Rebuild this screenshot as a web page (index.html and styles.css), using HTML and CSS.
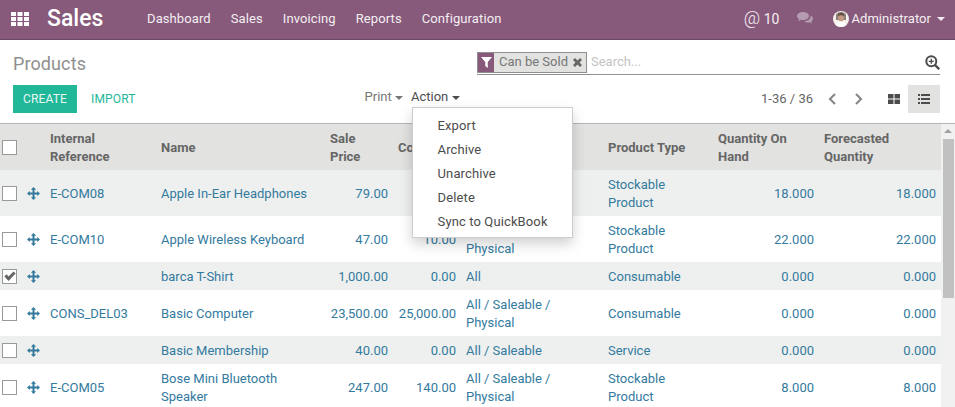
FILE: index.html
```html
<!DOCTYPE html>
<html>
<head>
    <title>Products - Sales</title>
    <meta charset="utf-8">
    <link rel="stylesheet" href="styles.css">
</head>
<body>
    <nav class="navbar">
        <svg class="apps" width="18" height="14" viewBox="0 0 18 14"><path fill="#fff" d="M0 0h5v4H0zM6.500 0h5v4h-5zM13 0h5v4h-5zM0 5h5v4H0zM6.500 5h5v4h-5zM13 5h5v4h-5zM0 10h5v4H0zM6.500 10h5v4h-5zM13 10h5v4h-5z"/></svg>
        <span class="brand">Sales</span>
        <ul class="menu">
            <li>Dashboard</li>
            <li>Sales</li>
            <li>Invoicing</li>
            <li>Reports</li>
            <li>Configuration</li>
        </ul>
        <div class="systray">
            <span class="mentions"><span class="at">@</span> 10</span>
            <svg class="chat" width="16" height="13" viewBox="0 0 16 13"><path fill="#b49bb0" d="M6 0c3.300 0 6 1.800 6 4s-2.700 4-6 4c-.7 0-1.300-.1-1.900-.2C3.100 8.600 2 9 1 9c.6-.6 1-1.300 1.100-2C.8 6.300 0 5.200 0 4c0-2.200 2.700-4 6-4z"/><path fill="#b49bb0" d="M13 3.500c1.800.6 3 1.800 3 3.200 0 1.100-.7 2-1.800 2.700.1.700.5 1.300 1 1.800-1 0-1.900-.4-2.700-1-.5.100-1 .2-1.500.2-1.700 0-3.200-.6-4-1.500 3.500.2 6.500-1.800 6.500-4.500 0-.3 0-.6-.5-.9z"/></svg>
            <span class="user">
                <svg class="avatar" width="16" height="16" viewBox="0 0 16 16"><circle cx="8" cy="8" r="8" fill="#f4f1ee"/><path fill="#8b7f78" d="M3 3.500C4.300 1.800 6 1 8 1s3.700.8 5 2.500V9H3z"/><ellipse cx="8" cy="6.500" rx="3" ry="4" fill="#c09a82"/><path fill="#5e4c44" d="M4.800 5.500C4.800 3 6.300 1.800 8 1.800s3.200 1.200 3.200 3.700c-.8-1-2-1.300-3.200-1.300S5.600 4.500 4.800 5.500z"/><path fill="#fff" d="M2.500 14c.7-2.300 2.700-3.500 5.500-3.500s4.800 1.200 5.500 3.500c-1.500 1.300-3.400 2-5.500 2s-4-.7-5.500-2z"/></svg>
                Administrator <i class="caret"></i>
            </span>
        </div>
    </nav>

    <div class="control-panel">
        <div class="cp-top">
            <h1 class="title">Products</h1>
            <div class="search">
                <span class="facet">
                    <span class="facet-icon"><svg width="11" height="11" viewBox="0 0 11 11"><path fill="#fff" d="M0 0h11L6.800 5v6L4.200 9V5z"/></svg></span>
                    <span class="facet-label">Can be Sold</span>
                    <svg class="facet-x" width="9" height="9" viewBox="0 0 9 9"><path fill="#666" d="M2 0l2.500 2.500L7 0l2 2-2.500 2.500L9 7 7 9 4.500 6.500 2 9 0 7l2.500-2.500L0 2z"/></svg>
                </span>
                <span class="search-text">Search...</span>
                <svg class="search-more" width="15" height="15" viewBox="0 0 15 15"><circle cx="6.300" cy="6.300" r="5" fill="none" stroke="#4c4c4c" stroke-width="2"/><path stroke="#4c4c4c" stroke-width="2.400" d="M10 10l4.200 4.200"/><path stroke="#4c4c4c" stroke-width="1.300" d="M3.800 6.300h5M6.300 3.800v5"/></svg>
            </div>
        </div>
        <div class="cp-bottom">
            <div class="buttons">
                <button class="btn-create">CREATE</button>
                <button class="btn-import">IMPORT</button>
            </div>
            <div class="sidebar">
                <span class="print">Print <i class="caret"></i></span>
                <span class="action">Action <i class="caret"></i></span>
                <ul class="dropdown">
                    <li>Export</li>
                    <li>Archive</li>
                    <li>Unarchive</li>
                    <li>Delete</li>
                    <li>Sync to QuickBook</li>
                </ul>
            </div>
            <div class="right-tools">
                <span class="pager">1-36 / 36</span>
                <svg class="chev" width="8" height="12" viewBox="0 0 8 12"><path fill="none" stroke="#8a8a8a" stroke-width="2.200" d="M7 1L2 6l5 5"/></svg>
                <svg class="chev" width="8" height="12" viewBox="0 0 8 12"><path fill="none" stroke="#8a8a8a" stroke-width="2.200" d="M1 1l5 5-5 5"/></svg>
                <span class="view view-grid">
                    <svg width="12" height="10" viewBox="0 0 12 10"><path fill="#4c4c4c" d="M0 0h5.500v4.400H0zM6.500 0H12v4.400H6.500zM0 5.400h5.500V10H0zM6.500 5.400H12V10H6.500z"/></svg>
                </span>
                <span class="view view-active">
                    <svg width="12" height="10" viewBox="0 0 12 10"><path fill="#4c4c4c" d="M0 0h2v2H0zM3 0h9v2H3zM0 4h2v2H0zM3 4h9v2H3zM0 8h2v2H0zM3 8h9v2H3z"/></svg>
                </span>
            </div>
        </div>
    </div>

    <div class="list-wrap">
        <table class="list">
            <colgroup>
                <col class="c-check"><col class="c-handle"><col class="c-ref"><col class="c-name"><col class="c-price"><col class="c-cost"><col class="c-cat"><col class="c-type"><col class="c-qty"><col class="c-fore">
            </colgroup>
            <thead>
                <tr>
                    <th><span class="check"></span></th>
                    <th></th>
                    <th>Internal Reference</th>
                    <th>Name</th>
                    <th>Sale Price</th>
                    <th>Cost</th>
                    <th>Internal Category</th>
                    <th>Product Type</th>
                    <th>Quantity On Hand</th>
                    <th>Forecasted Quantity</th>
                </tr>
            </thead>
            <tbody id="rows"></tbody>
        </table>
        <div class="scrollbar">
            <span class="scroll-up"></span>
            <span class="scroll-thumb"></span>
        </div>
    </div>

    <script>
        var products = [
            ['E-COM08', 'Apple In-Ear Headphones', '79.00', '70.00', 'All / Saleable / Physical', 'Stockable Product', '18.000', '18.000', false],
            ['E-COM10', 'Apple Wireless Keyboard', '47.00', '10.00', 'All / Saleable / Physical', 'Stockable Product', '22.000', '22.000', false],
            ['', 'barca T-Shirt', '1,000.00', '0.00', 'All', 'Consumable', '0.000', '0.000', true],
            ['CONS_DEL03', 'Basic Computer', '23,500.00', '25,000.00', 'All / Saleable / Physical', 'Consumable', '0.000', '0.000', false],
            ['', 'Basic Membership', '40.00', '0.00', 'All / Saleable', 'Service', '0.000', '0.000', false],
            ['E-COM05', 'Bose Mini Bluetooth Speaker', '247.00', '140.00', 'All / Saleable / Physical', 'Stockable Product', '8.000', '8.000', false]
        ];

        // move handle: cross shafts with four arrow heads
        var handle = '<svg width="13" height="13" viewBox="0 0 13 13"><path fill="#337a9e" d="M6.500 0l2.600 2.800H7.500v2.700h2.700V3.900L13 6.500l-2.800 2.600V7.500H7.500v2.700h1.600L6.500 13l-2.600-2.800h1.600V7.500H2.800v1.600L0 6.500l2.800-2.600v1.600h2.700V2.800H3.900z"/></svg>';

        var html = '';
        products.forEach(function (p) {
            html += '<tr>' +
                '<td><span class="check' + (p[8] ? ' checked' : '') + '"></span></td>' +
                '<td class="handle">' + handle + '</td>' +
                '<td>' + p[0] + '</td>' +
                '<td>' + p[1] + '</td>' +
                '<td class="num">' + p[2] + '</td>' +
                '<td class="num">' + p[3] + '</td>' +
                '<td>' + p[4] + '</td>' +
                '<td>' + p[5] + '</td>' +
                '<td class="num">' + p[6] + '</td>' +
                '<td class="num">' + p[7] + '</td>' +
                '</tr>';
        });
        document.getElementById('rows').innerHTML = html;
    </script>
</body>
</html>
```

FILE: styles.css
```css
html, body {
    height: 100%;
}
body {
    font-family: Roboto, "Noto Sans", sans-serif;
    font-size: 13px;
    line-height: 18px;
    margin: 0;
    color: #4c4c4c;
    background: white;
    overflow: hidden;
    display: flex;
    flex-direction: column;
}
ul { list-style: none; margin: 0; padding: 0; }
.caret {
    display: inline-block;
    width: 0;
    height: 0;
    vertical-align: middle;
    border-top: 4px solid currentColor;
    border-left: 4px solid transparent;
    border-right: 4px solid transparent;
}

.navbar {
    flex: none;
    box-sizing: border-box;
    height: 40px;
    display: flex;
    align-items: center;
    background: #875a7b;
    border-bottom: 1px solid #6b4862;
    color: white;
    padding: 0 10px 2px 11px;
}
.apps { margin-right: 18px; }
.brand { font-size: 23px; font-weight: 500; width: 100px; }
.menu { display: flex; gap: 20px; color: #f4eef2; letter-spacing: 0.1px; }
.systray { margin-left: auto; display: flex; align-items: center; color: #f4eef2; }
.mentions { font-size: 14px; }
.at { font-size: 18px; font-weight: 300; }
.chat { margin-left: 17px; margin-right: 20px; }
.user { display: flex; align-items: center; gap: 3px; letter-spacing: 0.05px; }
.user .caret { margin-left: 3px; }

.control-panel {
    flex: none;
    box-sizing: border-box;
    height: 84px;
    padding: 11px 15px 0 13px;
    border-bottom: 1px solid #b5b5b5;
}
.cp-top { display: flex; justify-content: space-between; height: 34px; }
.title { margin: 0; font-size: 18px; font-weight: 400; line-height: 26px; color: #8f8f8f; letter-spacing: 0.1px; }
.search {
    width: 463px;
    height: 22px;
    box-sizing: content-box;
    display: flex;
    align-items: center;
    border-bottom: 1px solid #919191;
    padding-bottom: 1px;
}
.facet {
    display: flex;
    align-items: center;
    box-sizing: border-box;
    height: 21px;
    background: #e2e2e0;
    border: 1px solid #8f8f8f;
    color: #777;
}
.facet-icon {
    width: 16px;
    height: 19px;
    display: flex;
    align-items: center;
    justify-content: center;
    background: #875a7b;
}
.facet-label { padding: 0 5px; }
.facet-x { margin-right: 4px; }
.search-text { color: #c4c4c4; margin-left: 4px; }
.search-more { margin-left: auto; }

.cp-bottom { display: flex; align-items: flex-start; position: relative; }
.buttons { display: flex; }
button {
    font: inherit;
    font-size: 12px;
    letter-spacing: 0.15px;
    border: 0;
    height: 28px;
    padding: 0 10px;
    background: none;
}
.btn-create { background: #21b799; color: #e8f7f4; }
.btn-import { color: #21b799; margin-left: 4px; }
.sidebar { margin-left: 219px; display: flex; gap: 8px; position: relative; padding-top: 3px; }
.print { color: #777; }
.action { color: #4c4c4c; }
.dropdown {
    position: absolute;
    top: 22px;
    left: 47px;
    width: 159px;
    padding: 6px 0 3px;
    background: white;
    border: 1px solid #ccc;
    box-shadow: 0 6px 12px rgba(0,0,0,0.18);
    z-index: 5;
    letter-spacing: 0.12px;
}
.dropdown li { height: 24px; line-height: 24px; padding-left: 25px; }
.right-tools { margin-left: auto; display: flex; align-items: center; height: 28px; }
.pager { color: #666; margin-right: 15px; }
.chev { margin-right: 19px; }
.chev + .chev { margin-right: 13px; }
.view { width: 32px; height: 28px; display: flex; align-items: center; justify-content: center; }
.view-grid svg { margin-left: 3px; }
.view-active { background: #e2e2e0; }

.list-wrap { flex: 1; display: flex; overflow: hidden; min-height: 0; }
.list {
    width: 941px;
    flex: none;
    align-self: flex-start;
    table-layout: fixed;
    border-collapse: collapse;
}
.c-check { width: 24px; }
.c-handle { width: 21px; }
.c-ref { width: 111px; }
.c-name { width: 169px; }
.c-price { width: 68px; }
.c-cost { width: 68px; }
.c-cat { width: 142px; }
.c-type { width: 110px; }
.c-qty { width: 106px; }
.c-fore { width: 122px; }
.list th, .list td { padding: 6px 5px 4px; text-align: left; vertical-align: middle; color: #337a9e; }
.list th { background: #e2e2e0; color: #666; font-weight: 700; height: 36px; }
.list tbody tr:nth-child(odd) { background: #eef0ef; }
.list td.num { text-align: right; }
.list th:first-child, .list td:first-child { padding: 0 0 0 2px; }
.list td.handle { padding: 0 0 0 3px; }
.handle svg { display: block; }
.check {
    display: block;
    box-sizing: border-box;
    width: 15px;
    height: 15px;
    background: white;
    border: 1px solid #999;
}
.check.checked { position: relative; }
.check.checked::after {
    content: "";
    position: absolute;
    left: 4px;
    top: 0;
    width: 3px;
    height: 7px;
    border: solid #666;
    border-width: 0 3px 3px 0;
    transform: rotate(45deg);
}

.scrollbar { flex: 1; display: flex; flex-direction: column; align-items: center; background: #f1f1f1; }
.scroll-up {
    margin-top: 5px;
    border-bottom: 4px solid #a0a0a0;
    border-left: 4px solid transparent;
    border-right: 4px solid transparent;
}
.scroll-thumb { width: 11px; height: 159px; margin-top: 6px; background: #c1c1c1; }
```
